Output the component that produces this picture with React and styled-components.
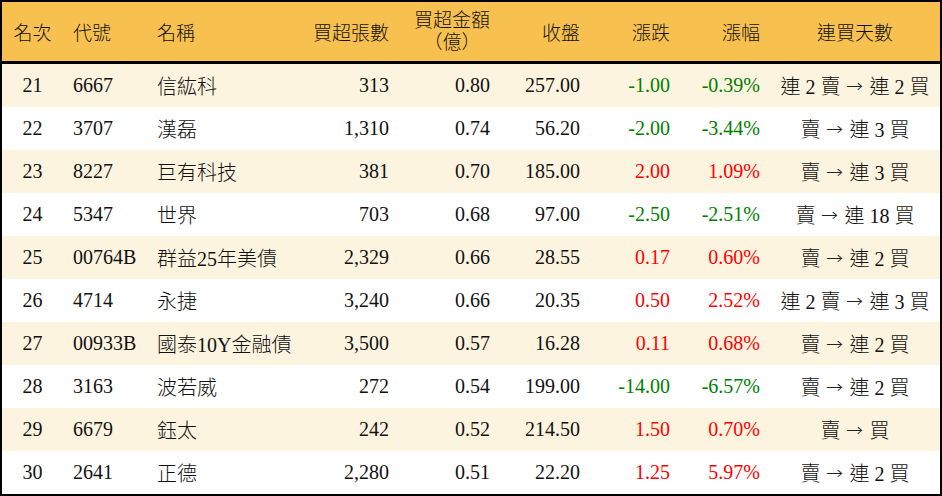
import React from "react";
import styled, { createGlobalStyle } from "styled-components";

const Global = createGlobalStyle`
  html, body { margin: 0; padding: 0; background: #fff; }
  * { box-sizing: border-box; }
`;

const COLS = "61px 84px 153px 99px 101px 90px 90px 90px 170px";

const Table = styled.div`
  width: 942px;
  height: 496px;
  border: 2px solid #000;
  font-family: "Liberation Serif", "Noto Sans CJK TC", serif;
  color: #111;
  display: flex;
  flex-direction: column;
`;

const HeaderRow = styled.div`
  display: grid;
  grid-template-columns: ${COLS};
  height: 62px;
  background: #f8c14f;
  border-bottom: 3px solid #000;
  font-size: 19px;
  font-weight: 300;
`;

const Row = styled.div`
  display: grid;
  grid-template-columns: ${COLS};
  height: 43px;
  background: ${(p) => (p.$alt ? "#fdf4e0" : "#ffffff")};
  font-size: 20px;
  font-weight: 300;
`;

const Cell = styled.div`
  display: flex;
  align-items: center;
  justify-content: ${(p) =>
    p.$align === "right" ? "flex-end" : p.$align === "center" ? "center" : "flex-start"};
  padding: ${(p) =>
    p.$align === "right" ? "0 10px 0 0" : p.$align === "center" ? "0" : "0 0 0 10px"};
  color: ${(p) => (p.$tone === "up" ? "#ff0000" : p.$tone === "down" ? "#008000" : "inherit")};
  white-space: pre;
`;

const HeadStack = styled.span`
  display: inline-block;
  text-align: center;
  line-height: 22px;
`;

const Streak = styled.span`
  display: inline-flex;
  align-items: center;
  white-space: pre;
`;

const Arrow = styled.span`
  font-family: "DejaVu Sans", sans-serif;
  font-size: 18px;
  transform: scaleX(1.15);
  margin: 0 7px;
  color: #222;
`;

const rows = [
  ["21", "6667", "信紘科", "313", "0.80", "257.00", "-1.00", "-0.39%", "連 2 賣", "連 2 買"],
  ["22", "3707", "漢磊", "1,310", "0.74", "56.20", "-2.00", "-3.44%", "賣", "連 3 買"],
  ["23", "8227", "巨有科技", "381", "0.70", "185.00", "2.00", "1.09%", "賣", "連 3 買"],
  ["24", "5347", "世界", "703", "0.68", "97.00", "-2.50", "-2.51%", "賣", "連 18 買"],
  ["25", "00764B", "群益25年美債", "2,329", "0.66", "28.55", "0.17", "0.60%", "賣", "連 2 買"],
  ["26", "4714", "永捷", "3,240", "0.66", "20.35", "0.50", "2.52%", "連 2 賣", "連 3 買"],
  ["27", "00933B", "國泰10Y金融債", "3,500", "0.57", "16.28", "0.11", "0.68%", "賣", "連 2 買"],
  ["28", "3163", "波若威", "272", "0.54", "199.00", "-14.00", "-6.57%", "賣", "連 2 買"],
  ["29", "6679", "鈺太", "242", "0.52", "214.50", "1.50", "0.70%", "賣", "買"],
  ["30", "2641", "正德", "2,280", "0.51", "22.20", "1.25", "5.97%", "賣", "連 2 買"],
];

export default function App() {
  return (
    <>
      <Global />
      <Table>
        <HeaderRow>
          <Cell $align="center">名次</Cell>
          <Cell>代號</Cell>
          <Cell>名稱</Cell>
          <Cell $align="right">買超張數</Cell>
          <Cell $align="right">
            <HeadStack>
              買超金額
              <br />
              （億）
            </HeadStack>
          </Cell>
          <Cell $align="right">收盤</Cell>
          <Cell $align="right">漲跌</Cell>
          <Cell $align="right">漲幅</Cell>
          <Cell $align="center">連買天數</Cell>
        </HeaderRow>
        {rows.map((r, i) => {
          const tone = r[6].startsWith("-") ? "down" : "up";
          return (
            <Row key={r[0]} $alt={i % 2 === 0}>
              <Cell $align="center">{r[0]}</Cell>
              <Cell>{r[1]}</Cell>
              <Cell>{r[2]}</Cell>
              <Cell $align="right">{r[3]}</Cell>
              <Cell $align="right">{r[4]}</Cell>
              <Cell $align="right">{r[5]}</Cell>
              <Cell $align="right" $tone={tone}>{r[6]}</Cell>
              <Cell $align="right" $tone={tone}>{r[7]}</Cell>
              <Cell $align="center">
                <Streak>
                  {r[8]}
                  <Arrow>→</Arrow>
                  {r[9]}
                </Streak>
              </Cell>
            </Row>
          );
        })}
      </Table>
    </>
  );
}
